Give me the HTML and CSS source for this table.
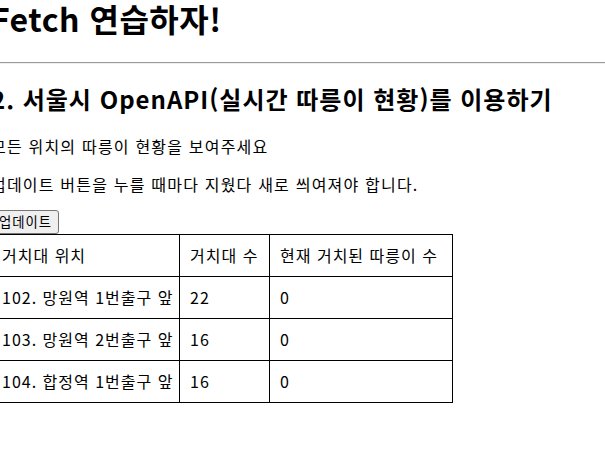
FILE: index.html
```html
<!DOCTYPE html>
<html lang="ko">
<head>
<meta charset="utf-8">
<title>Fetch 연습하자!</title>
<link rel="stylesheet" href="styles.css">
</head>
<body>
<div class="page">
  <h1 class="title">Fetch 연습하자!</h1>
  <hr class="divider">
  <h2 class="subtitle">2. 서울시 OpenAPI(실시간 따릉이 현황)를 이용하기</h2>
  <p class="desc desc-first">모든 위치의 따릉이 현황을 보여주세요</p>
  <p class="desc desc-second">업데이트 버튼을 누를 때마다 지웠다 새로 씌여져야 합니다.</p>
  <div class="toolbar"><button class="update-btn" type="button">업데이트</button></div>
  <table class="bike-table">
    <colgroup>
      <col class="col-loc">
      <col class="col-rack">
      <col class="col-bike">
    </colgroup>
    <tbody>
      <tr><td>거치대 위치</td><td>거치대 수</td><td>현재 거치된 따릉이 수</td></tr>
      <tr><td>102. 망원역 1번출구 앞</td><td>22</td><td>0</td></tr>
      <tr><td>103. 망원역 2번출구 앞</td><td>16</td><td>0</td></tr>
      <tr><td>104. 합정역 1번출구 앞</td><td>16</td><td>0</td></tr>
    </tbody>
  </table>
</div>
</body>
</html>
```

FILE: styles.css
```css
html, body {
  margin: 0;
  padding: 0;
  background: #ffffff;
  overflow: hidden;
}

body {
  font-family: "Noto Sans CJK KR", "Noto Sans", sans-serif;
  color: #000000;
}

.page {
  margin-left: -9px;
}

.title {
  font-size: 32px;
  font-weight: 700;
  line-height: 36px;
  letter-spacing: 0.5px;
  margin: 0 0 26px;
}

.divider {
  margin: 0;
  border: none;
  border-top: 1px solid #9a9a9a;
  border-bottom: 1px solid #eeeeee;
  height: 0;
}

.subtitle {
  font-size: 24px;
  font-weight: 700;
  line-height: 30px;
  letter-spacing: 1px;
  margin: 20px 0 21px;
}

.desc {
  font-size: 16px;
  line-height: 23px;
  letter-spacing: 1.2px;
  margin: 0;
}

.desc-first {
  margin-bottom: 15px;
}

.desc-second {
  margin-bottom: 14px;
}

.toolbar {
  display: flex;
}

.update-btn {
  display: block;
  height: 24px;
  font-family: "Noto Sans CJK KR", sans-serif;
  font-size: 13.33px;
  line-height: 20px;
  letter-spacing: 1px;
  padding: 0 6px 0 7px;
  border: 1px solid #767676;
  border-radius: 3px;
  background: #efefef;
  color: #000000;
}

.bike-table {
  border-collapse: collapse;
  table-layout: fixed;
  width: 461px;
  font-size: 16px;
  line-height: 21px;
  letter-spacing: 1px;
}

.bike-table td {
  border: 1px solid #000000;
  padding: 10px;
  text-align: left;
  white-space: nowrap;
}

.col-loc { width: 188px; }
.col-rack { width: 90px; }
.col-bike { width: 183px; }
```
